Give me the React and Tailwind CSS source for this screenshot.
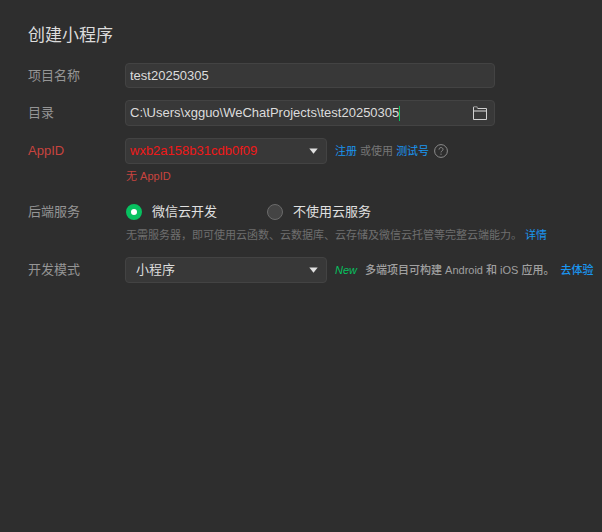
import { useState } from "react";

function Label({ htmlFor, error, children }) {
  return (
    <label
      htmlFor={htmlFor}
      className={`h-[26px] w-[97px] shrink-0 leading-[26px] ${error ? "text-[#c8443f]" : "text-[#959595]"}`}
    >
      {children}
    </label>
  );
}

function Select({ id, className, children }) {
  return (
    <div className="relative w-[202px] shrink-0">
      <select
        id={id}
        className={`block h-[26px] w-full appearance-none rounded border border-[#434343] bg-[#383838] pr-7 outline-none ${className}`}
      >
        {children}
      </select>
      <svg className="pointer-events-none absolute top-[10px] right-[9px]" width="9" height="6" viewBox="0 0 9 6" aria-hidden="true">
        <path d="M0.3 0.5h8.4L4.5 5.8z" fill="#e0e0e0" />
      </svg>
    </div>
  );
}

function Radio({ label, value, selected, onSelect }) {
  return (
    <label className="flex items-center gap-[10px] text-[#e0e0e0]">
      <input
        type="radio"
        name="backend"
        value={value}
        checked={selected === value}
        onChange={() => onSelect(value)}
        className="size-4 appearance-none rounded-full border border-[#6b6b6b] bg-[#444444] checked:border-[5px] checked:border-[#07c160] checked:bg-white"
      />
      {label}
    </label>
  );
}

function Link({ children }) {
  return (
    <a href="#" className="text-[#1a96f0]">
      {children}
    </a>
  );
}

export default function App() {
  const [name, setName] = useState("test20250305");
  const [dir, setDir] = useState("C:\\Users\\xgguo\\WeChatProjects\\test20250305");
  const [backend, setBackend] = useState("cloud");

  return (
    <main className="min-h-screen bg-[#2e2e2e] pt-6 pl-7 font-['Liberation_Sans','Noto_Sans_CJK_SC',sans-serif] text-[13px] whitespace-nowrap">
      <h1 className="text-[17px] leading-6 text-[#dcdcdc]">创建小程序</h1>
      <form className="mt-[15px]">
        <div className="flex">
          <Label htmlFor="name">项目名称</Label>
          <input
            id="name"
            value={name}
            onChange={(e) => setName(e.target.value)}
            className="h-[25px] w-[370px] rounded border border-[#434343] bg-[#383838] px-1 text-[#dcdcdc] outline-none"
          />
        </div>

        <div className="mt-[11px] flex">
          <Label htmlFor="dir">目录</Label>
          <div className="flex h-[26px] w-[370px] items-center rounded border border-[#434343] bg-[#383838] pr-[7px] pl-1">
            <div className="flex grow items-center">
              <input
                id="dir"
                value={dir}
                onChange={(e) => setDir(e.target.value)}
                className="field-sizing-content bg-transparent text-[#dcdcdc] outline-none"
              />
              <span className="h-[15px] w-px shrink-0 bg-[#07c160]" />
            </div>
            <button type="button" aria-label="选择目录">
              <svg width="14" height="14" viewBox="0 0 14 14" fill="none" aria-hidden="true">
                <path d="M0.5 1v12.5h13V2.5H4.5" stroke="#d0d0d0" />
                <path d="M0.5 0.8h3.7v1.4" stroke="#9a9a9a" />
                <path d="M1 5h12" stroke="#8a8a8a" strokeWidth="2" />
              </svg>
            </button>
          </div>
        </div>

        <div className="mt-3 flex">
          <Label htmlFor="appid" error>
            AppID
          </Label>
          <div>
            <div className="flex gap-2">
              <Select id="appid" className="pl-1 text-[#f01818]">
                <option>wxb2a158b31cdb0f09</option>
              </Select>
              <div className="flex h-[26px] items-center gap-[5px] text-[11px] text-[#777777]">
                <p>
                  <Link>注册</Link> 或使用 <Link>测试号</Link>
                </p>
                <button type="button" aria-label="帮助">
                  <svg width="14" height="14" viewBox="0 0 14 14" fill="none" stroke="#8c8c8c" aria-hidden="true">
                    <circle cx="7" cy="7" r="6.4" />
                    <path d="M5 5.6c0-2.8 4-2.6 4-0.2 0 1.5-2 1.5-2 3M7 9.6v1.2" />
                  </svg>
                </button>
              </div>
            </div>
            <p className="mt-1 pl-px text-[11px] leading-4 text-[#c8443f]">无 AppID</p>
          </div>
        </div>

        <div className="mt-[15px] flex">
          <Label>后端服务</Label>
          <div className="pl-px">
            <div className="flex h-[26px] gap-[50px]" role="radiogroup" aria-label="后端服务">
              <Radio label="微信云开发" value="cloud" selected={backend} onSelect={setBackend} />
              <Radio label="不使用云服务" value="none" selected={backend} onSelect={setBackend} />
            </div>
            <p className="mt-[2px] text-[11px] leading-4 text-[#6e6e6e]">
              无需服务器，即可使用云函数、云数据库、云存储及微信云托管等完整云端能力。 <Link>详情</Link>
            </p>
          </div>
        </div>

        <div className="mt-[14px] flex">
          <Label htmlFor="mode">开发模式</Label>
          <Select id="mode" className="pl-[10px] text-[#dcdcdc]">
            <option>小程序</option>
          </Select>
          <p className="flex h-[26px] items-center pl-2 text-[11px] font-medium text-[#a0a0a0]">
            <em className="mr-2 text-[#07c160]">New</em>
            <span className="mr-[6px]">多端项目可构建 Android 和 iOS 应用。</span>
            <Link>去体验</Link>
          </p>
        </div>
      </form>
    </main>
  );
}
